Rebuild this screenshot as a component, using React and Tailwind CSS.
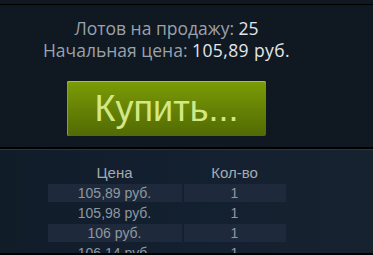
export default function App() {
  const rows = [
    ["105,89 руб.", "1"],
    ["105,98 руб.", "1"],
    ["106 руб.", "1"],
    ["106,14 руб.", "1"],
  ];
  return (
    <div className="w-[373px] h-[255px] overflow-hidden bg-[#101822] flex flex-col" style={{ fontFamily: '"Liberation Sans", Arial, sans-serif' }}>
      <div className="h-[4px] shrink-0 bg-[#101822]" />
      <div className="h-[1px] shrink-0 bg-[#000000]" />
      <div className="h-[142px] shrink-0 w-[333px] flex flex-col items-center">
        <div className="mt-[12px] flex flex-col items-center text-[17.5px] leading-[22px] text-[#9aa2ab] font-['Open_Sans',sans-serif]">
          <div>
            Лотов на продажу: <span className="text-[#e4e6e8]">25</span>
          </div>
          <div>
            Начальная цена: <span className="text-[#e4e6e8] tracking-[0.4px]">105,89 руб.</span>
          </div>
        </div>
        <div className="mt-[20px] w-[199px] h-[55px] rounded-[2px] bg-gradient-to-b from-[#7c9c06] to-[#526a04] shadow-[inset_0_1px_0_#a8c813,inset_1px_0_0_#8aa80c] flex items-center justify-center text-[36px] text-[#d2e885]">
          Купить...
        </div>
      </div>
      <div className="h-[2px] shrink-0 bg-[#000000]" />
      <div className="h-[1px] shrink-0 bg-[#2a3646]" />
      <div className="flex-1 min-h-0 overflow-hidden bg-gradient-to-r from-[#111c29] via-[#132030] to-[#17222f]">
        <div className="w-[333px] flex flex-col items-center">
          <div className="mt-[14px] w-[238px] flex text-[15px] leading-[18px] text-[#a3abb3]">
            <div className="w-[134px] text-center">Цена</div>
            <div className="w-[104px] text-center pl-[2px]">Кол-во</div>
          </div>
          <div className="mt-[2px] w-[238px] flex flex-col gap-[2px]">
            {rows.map((r, i) => (
              <div key={i} className="flex gap-[2px] h-[18px] text-[14px] leading-[18px] text-[#8f98a0]">
                <div className={"w-[134px] text-center " + (i % 2 === 0 ? "bg-[#1e2a3b]" : "")}>{r[0]}</div>
                <div className={"w-[102px] text-center " + (i % 2 === 0 ? "bg-[#1e2a3b]" : "")}>{r[1]}</div>
              </div>
            ))}
          </div>
        </div>
      </div>
      <div className="h-[2px] shrink-0 bg-[#000000]" />
    </div>
  );
}
